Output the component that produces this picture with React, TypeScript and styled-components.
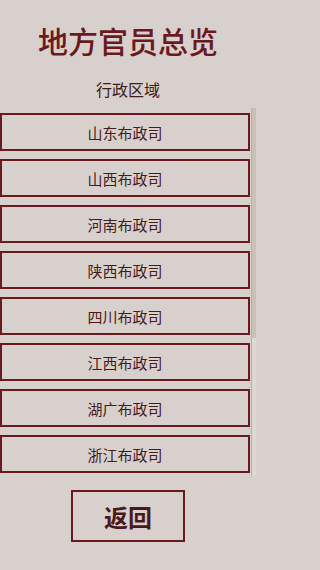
import React from "react";
import styled, { createGlobalStyle } from "styled-components";

const provinces = [
  "山东布政司",
  "山西布政司",
  "河南布政司",
  "陕西布政司",
  "四川布政司",
  "江西布政司",
  "湖广布政司",
  "浙江布政司",
  "福建布政司",
  "广东布政司",
  "广西布政司",
  "云南布政司",
  "贵州布政司",
];

const GlobalStyle = createGlobalStyle`
  html, body {
    margin: 0;
    padding: 0;
    background: #d8d0cc;
  }
  body {
    font-family: "Noto Sans CJK SC", "Noto Sans", sans-serif;
  }
`;

const Page = styled.div`
  width: 256px;
  height: 570px;
  display: flex;
  flex-direction: column;
  align-items: center;
  background: #d8d0cc;
  overflow: hidden;
`;

const Title = styled.h1`
  margin: 22px 0 0;
  font-size: 30px;
  line-height: 36px;
  font-weight: 500;
  color: #6a1a1e;
`;

const Subtitle = styled.div`
  margin-top: 19px;
  font-size: 16px;
  line-height: 24px;
  color: #3c1c1c;
`;

const ScrollFrame = styled.div`
  margin-top: 7px;
  align-self: stretch;
  height: 368px;
  display: flex;
`;

const List = styled.div`
  flex: 1;
  padding: 5px 1px 0 0;
  display: flex;
  flex-direction: column;
  gap: 8px;
  overflow-y: auto;
  scrollbar-width: none;

  &::-webkit-scrollbar {
    display: none;
  }
`;

const ScrollTrack = styled.div`
  width: 4px;
  border-left: 1px solid #b9b1a9;
  background: #ddd8d3;
`;

const ScrollThumb = styled.div`
  height: 230px;
  background: #c9c1b5;
`;

const Item = styled.button`
  flex: none;
  height: 38px;
  width: 100%;
  box-sizing: border-box;
  border: 2px solid #6a1a1e;
  background: #d8d0cc;
  font-family: inherit;
  font-size: 15px;
  color: #4a1a1a;
  padding: 0;
  cursor: pointer;
`;

const BackButton = styled.button`
  margin-top: 14px;
  width: 114px;
  height: 52px;
  box-sizing: border-box;
  border: 2px solid #6a1a1e;
  background: #d8d0cc;
  font-family: inherit;
  font-size: 24px;
  font-weight: 700;
  color: #4a1a1a;
  padding: 0;
  cursor: pointer;
`;

function App() {
  return (
    <>
      <GlobalStyle />
      <Page>
        <Title>地方官员总览</Title>
        <Subtitle>行政区域</Subtitle>
        <ScrollFrame>
          <List>
            {provinces.map((p) => (
              <Item key={p}>{p}</Item>
            ))}
          </List>
          <ScrollTrack>
            <ScrollThumb />
          </ScrollTrack>
        </ScrollFrame>
        <BackButton>返回</BackButton>
      </Page>
    </>
  );
}

export default App;
